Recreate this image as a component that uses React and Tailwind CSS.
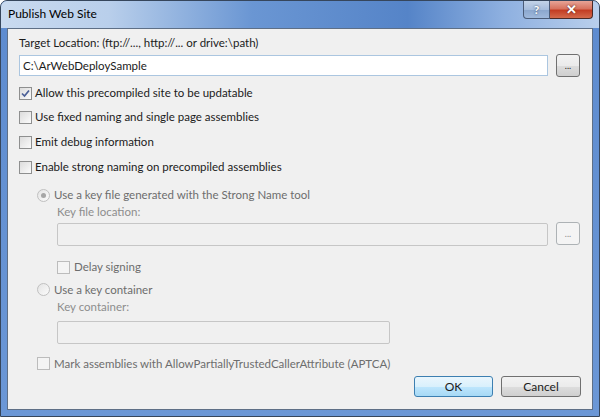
import React from 'react';

const FONT = { fontFamily: 'Lato, "Noto Sans", sans-serif' };

function CheckBox({ checked = false, disabled = false }) {
  return (
    <span
      className={
        'relative flex h-[13px] w-[13px] shrink-0 items-center justify-center border ' +
        (disabled
          ? 'border-[#bcbcbc] bg-[#f4f4f4]'
          : 'border-[#8e8f8f] bg-[linear-gradient(135deg,#dcdcdc,#fbfbfb)]')
      }
    >
      {checked && (
        <svg width="9" height="9" viewBox="0 0 9 9">
          <path d="M1 4.5 L3.5 7 L8 1.5" fill="none" stroke="#4a5f97" strokeWidth="1.7" />
        </svg>
      )}
    </span>
  );
}

function Radio({ checked = false }) {
  return (
    <span className="flex h-[13px] w-[13px] shrink-0 items-center justify-center rounded-full border border-[#c0c0c0] bg-[linear-gradient(135deg,#e4e4e4,#fbfbfb)]">
      {checked && <span className="h-[5px] w-[5px] rounded-full bg-[#a6a6a6]" />}
    </span>
  );
}

function Row({ children, className = '', disabled = false }) {
  return (
    <div
      className={
        'flex h-[16px] items-center gap-[3px] text-[11.5px] leading-[16px] ' +
        (disabled ? 'text-[#6d6d6d] ' : 'text-[#1b1b1b] ') +
        className
      }
    >
      {children}
    </div>
  );
}

function DotsButton({ disabled = false }) {
  return (
    <button
      className={
        'flex h-[23px] w-[24px] shrink-0 items-end justify-center rounded-[3px] border pb-[6px] text-[9px] leading-none ' +
        (disabled
          ? 'border-[#adb2b5] bg-[#f4f4f4] text-[#8d8d8d]'
          : 'border-[#707070] bg-[linear-gradient(to_bottom,#f2f2f2_0%,#ebebeb_50%,#dddddd_51%,#cfcfcf_100%)] text-[#1b1b1b]')
      }
    >
      ...
    </button>
  );
}

function PushButton({ label, primary = false }) {
  return (
    <button
      className={
        'h-[21px] rounded-[3px] border text-[12px] leading-none text-[#1b1b1b] ' +
        (primary
          ? 'w-[79px] border-[#3c7fb1] bg-[linear-gradient(to_bottom,#eaf6fd_0%,#d9f0fc_50%,#bee6fd_51%,#a7d9f5_100%)]'
          : 'w-[80px] border-[#707070] bg-[linear-gradient(to_bottom,#f2f2f2_0%,#ebebeb_50%,#dddddd_51%,#cfcfcf_100%)]')
      }
    >
      {label}
    </button>
  );
}

export default function App() {
  return (
    <div
      className="flex h-[417px] w-[600px] flex-col overflow-hidden rounded-t-[7px] border border-[#36465c] bg-[linear-gradient(to_bottom,#5d8bcf,#6b97d6)]"
      style={FONT}
    >
      {/* title bar */}
      <div className="flex h-[27px] shrink-0 items-start justify-between bg-[linear-gradient(to_right,#c9daef_0%,#b9cfeb_18%,#6a96d3_42%,#5584c8_68%,#8eb0e0_84%,#b9cfec_100%)] pr-[6px]">
        <span className="mt-[5px] ml-[7px] text-[12px] leading-[16px] text-[#000]">Publish Web Site</span>
        <div className="flex">
          <div className="flex h-[18px] w-[27px] items-center justify-center rounded-bl-[4px] border border-t-0 border-[#4b5c78] bg-[linear-gradient(to_bottom,#c3d3e8_0%,#a6bddc_50%,#8aa6cd_51%,#9fb9dc_100%)] text-[12px] font-bold leading-none text-white [text-shadow:0_0_2px_#2b3a55]">
            ?
          </div>
          <div className="flex h-[18px] w-[43px] items-center justify-center rounded-br-[4px] border border-t-0 border-l-0 border-[#4b2a28] bg-[linear-gradient(to_bottom,#e7a497_0%,#d7735f_45%,#c33d24_55%,#d46a4c_100%)] text-[13px] font-bold leading-none text-white [text-shadow:0_0_2px_#4b1a10]">
            ✕
          </div>
        </div>
      </div>

      {/* client area */}
      <div className="mx-[6px] mb-[6px] flex flex-1 flex-col border border-[#5e6f86] bg-[#f0f0f0] pl-[11px] pr-[11px]">
        <div className="mt-[6px] h-[16px] text-[11.5px] leading-[16px] text-[#1b1b1b]">
          Target Location: (ftp://..., http://... or drive:\path)
        </div>
        <div className="mt-[3px] flex h-[23px] items-center gap-[8px] pr-[1px]">
          <div className="flex h-[21px] flex-1 items-center border border-[#abc6e0] bg-white px-[3px] text-[11.5px] text-[#1b1b1b]">
            C:\ArWebDeploySample
          </div>
          <DotsButton />
        </div>

        <Row className="mt-[8px]">
          <CheckBox checked />
          <span>Allow this precompiled site to be updatable</span>
        </Row>
        <Row className="mt-[8px]">
          <CheckBox />
          <span>Use fixed naming and single page assemblies</span>
        </Row>
        <Row className="mt-[9px]">
          <CheckBox />
          <span>Emit debug information</span>
        </Row>
        <Row className="mt-[9px]">
          <CheckBox />
          <span>Enable strong naming on precompiled assemblies</span>
        </Row>

        <div className="flex flex-col pl-[18px]">
          <Row disabled className="mt-[12px]">
            <Radio checked />
            <span className="ml-[1px]">Use a key file generated with the Strong Name tool</span>
          </Row>
          <div className="mt-[1px] h-[16px] pl-[20px] text-[11.5px] leading-[16px] text-[#8d8d8d]">Key file location:</div>
          <div className="mt-[2px] flex items-start gap-[8px] pl-[20px] pr-[1px]">
            <div className="mt-[1px] h-[23px] flex-1 rounded-[2px] border border-[#c6c6c6] bg-[#f0f0f0]" />
            <DotsButton disabled />
          </div>
          <Row disabled className="mt-[13px] pl-[20px]">
            <CheckBox disabled />
            <span className="ml-[1px]">Delay signing</span>
          </Row>
          <Row disabled className="mt-[6.5px]">
            <Radio />
            <span className="ml-[1px]">Use a key container</span>
          </Row>
          <div className="mt-[1.5px] h-[16px] pl-[20px] text-[11.5px] leading-[16px] text-[#8d8d8d]">Key container:</div>
          <div className="mt-[6px] pl-[20px]">
            <div className="h-[23px] w-[333px] rounded-[2px] border border-[#c6c6c6] bg-[#f0f0f0]" />
          </div>
          <Row disabled className="mt-[11.5px]">
            <CheckBox disabled />
            <span className="ml-[1px]">Mark assemblies with AllowPartiallyTrustedCallerAttribute (APTCA)</span>
          </Row>
        </div>

        <div className="mt-[4.5px] flex justify-end gap-[8px]">
          <PushButton label="OK" primary />
          <PushButton label="Cancel" />
        </div>
      </div>
    </div>
  );
}
